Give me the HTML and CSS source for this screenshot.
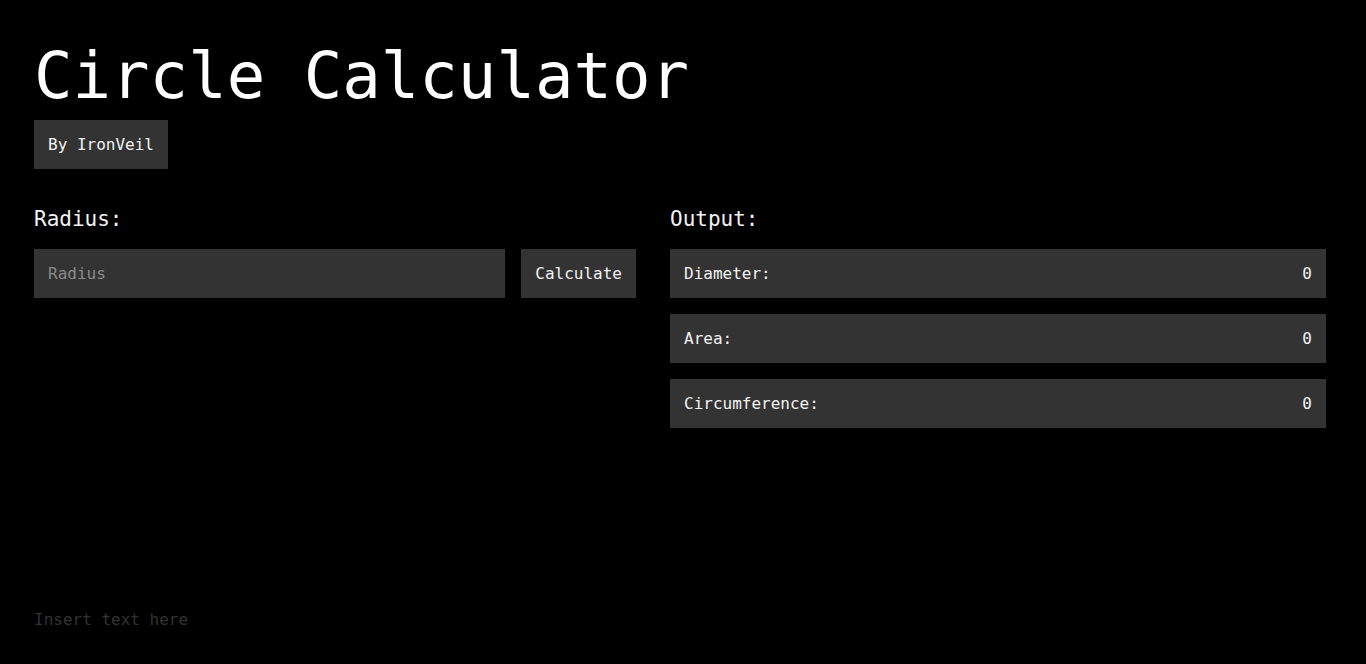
FILE: index.html
```html
<!DOCTYPE html>
<html lang="en">
<head>
<meta charset="utf-8">
<title>Circle Calculator</title>
<link rel="stylesheet" href="styles.css">
</head>
<body>
  <header class="header">
    <h1 class="title">Circle Calculator</h1>
    <div class="badge">By IronVeil</div>
  </header>
  <main class="columns">
    <section class="col col-input">
      <h2 class="label">Radius:</h2>
      <div class="input-row">
        <input class="field" type="text" placeholder="Radius">
        <button class="btn" type="button">Calculate</button>
      </div>
    </section>
    <section class="col col-output">
      <h2 class="label">Output:</h2>
      <div class="outputs">
        <div class="out-row"><span>Diameter:</span><span>0</span></div>
        <div class="out-row"><span>Area:</span><span>0</span></div>
        <div class="out-row"><span>Circumference:</span><span>0</span></div>
      </div>
    </section>
  </main>
  <footer class="footer">Insert text here</footer>
</body>
</html>
```
FILE: styles.css
```css
* { box-sizing: border-box; }
html, body { margin: 0; }
body {
  background: #000;
  color: #f2f2f2;
  font-family: "DejaVu Sans Mono", "Liberation Mono", monospace;
  min-height: 100vh;
  padding: 38px 40px 34px 34px;
  display: flex;
  flex-direction: column;
  align-items: stretch;
}
.header { display: flex; flex-direction: column; align-items: flex-start; }
.title {
  margin: 0;
  font-size: 64px;
  line-height: 76px;
  font-weight: normal;
  color: #fff;
}
.badge {
  margin-top: 6px;
  background: #333;
  padding: 14px;
  font-size: 16px;
  line-height: 21px;
  color: #f2f2f2;
}
.columns {
  display: grid;
  grid-template-columns: 602px 656px;
  column-gap: 34px;
  margin-top: 38px;
}
.label {
  margin: 0 0 17px;
  font-size: 21px;
  line-height: 25px;
  font-weight: normal;
  color: #f2f2f2;
}
.input-row { display: flex; gap: 16px; }
.field {
  flex: 1;
  min-width: 0;
  height: 49px;
  border: 0;
  outline: none;
  background: #333;
  color: #f2f2f2;
  padding: 0 14px;
  font-family: inherit;
  font-size: 16px;
}
.field::placeholder { color: #8a8a8a; }
.btn {
  height: 49px;
  border: 0;
  background: #333;
  color: #f2f2f2;
  padding: 0 14px;
  font-family: inherit;
  font-size: 16px;
}
.outputs { display: flex; flex-direction: column; gap: 16px; }
.out-row {
  height: 49px;
  background: #333;
  display: flex;
  align-items: center;
  justify-content: space-between;
  padding: 0 14px;
  font-size: 16px;
  color: #f2f2f2;
}
.footer {
  margin-top: auto;
  font-size: 16px;
  line-height: 21px;
  color: #333;
}
```
